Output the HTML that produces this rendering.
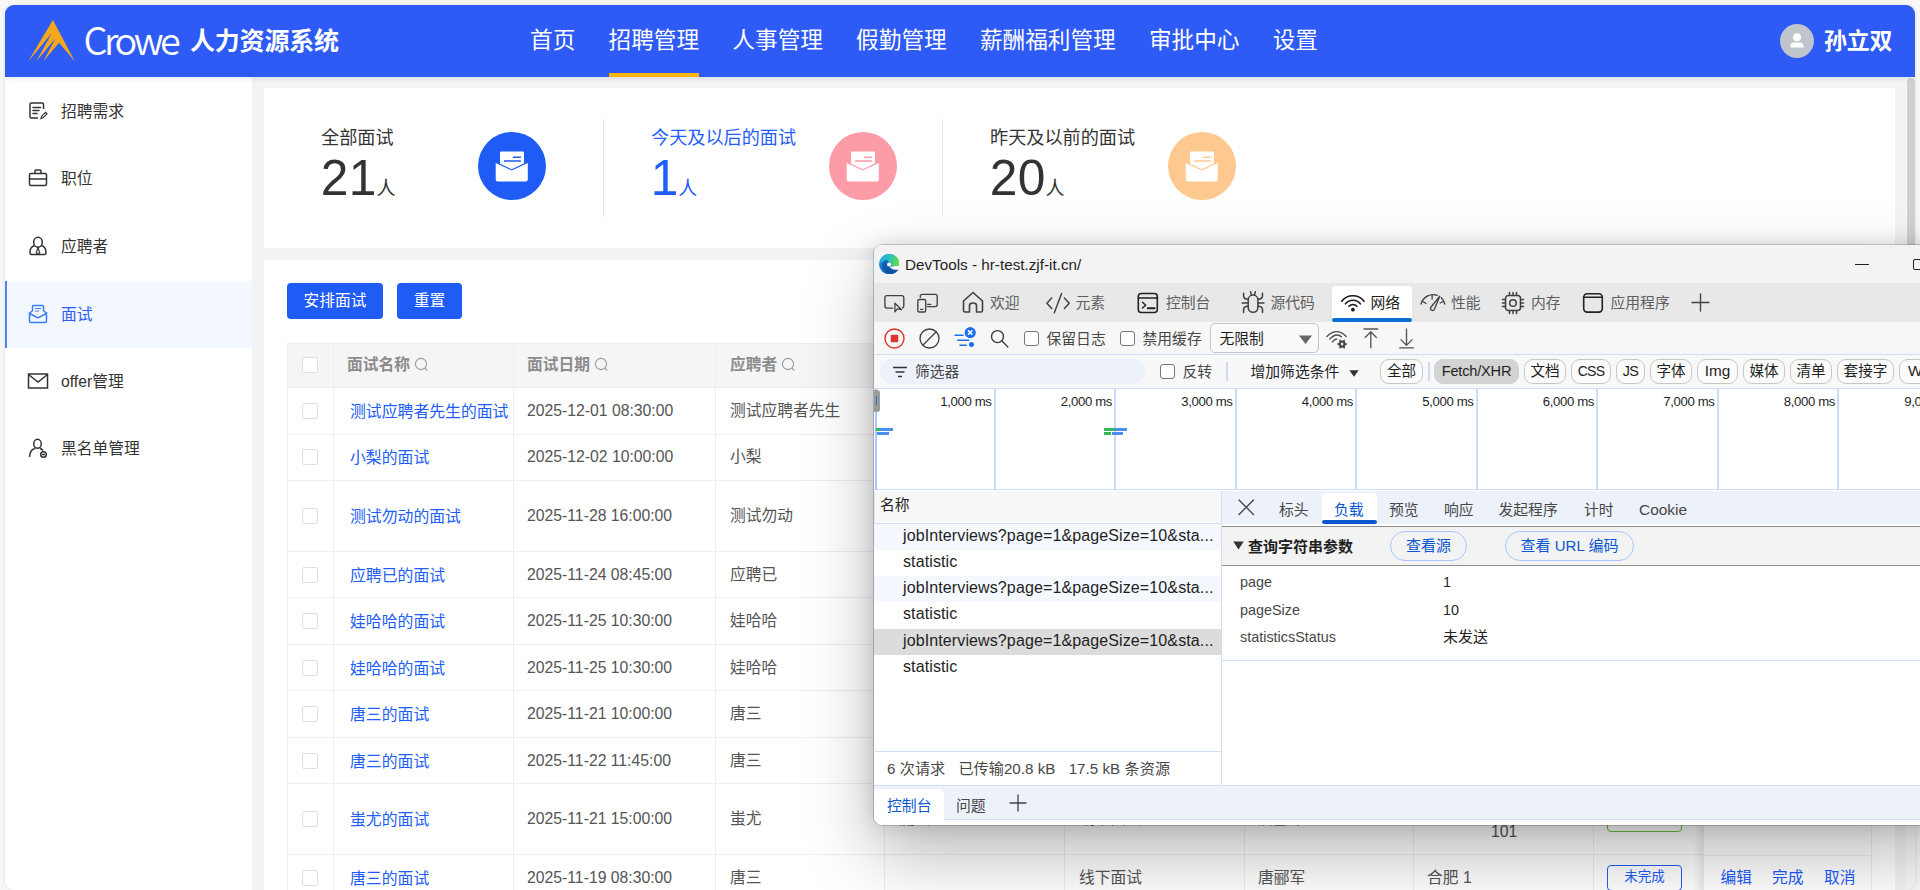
<!DOCTYPE html>
<html lang="zh-CN">
<head>
<meta charset="utf-8">
<title>人力资源系统</title>
<style>
*{box-sizing:border-box;margin:0;padding:0}
html,body{width:1920px;height:890px;overflow:hidden;background:#f7f7f7}
body{font-family:"Liberation Sans","Noto Sans CJK SC",sans-serif;color:#333;position:relative}
.abs{position:absolute}
#frame{position:absolute;left:5px;top:5px;width:1910px;height:885px;background:#f2f3f5;border-radius:9px;overflow:hidden;box-shadow:0 0 3px rgba(0,0,0,.13)}
/* header */
#hdr{position:absolute;left:0;top:0;width:1910px;height:72px;background:#2e5af6;color:#fff;z-index:5;box-shadow:0 1px 5px rgba(0,21,41,.12)}
#hdr .crowe{position:absolute;left:78.500px;top:12.300px;font-size:37.800px;line-height:44px;font-weight:350;letter-spacing:-3.450px;color:#fff;font-family:"Noto Sans CJK SC","Liberation Sans",sans-serif}
#hdr .sys{position:absolute;left:185px;top:18.300px;font-size:25px;line-height:36px;font-weight:700;letter-spacing:-.2px}
#nav{position:absolute;left:508.500px;top:0;height:72px;display:flex}
#nav span{display:block;margin:0 16.600px;font-size:22.650px;line-height:30px;padding-top:20.300px;height:72px;white-space:nowrap;position:relative}
#nav span.on:after{content:"";position:absolute;left:0;right:0;bottom:0;height:4.500px;background:#fbb50a}
#user{position:absolute;left:1819px;top:21.300px;font-size:23px;line-height:30px;font-weight:700;letter-spacing:-.2px}
#avatar{position:absolute;left:1775px;top:19px;width:34px;height:34px;border-radius:50%;background:#c0c4cc}
/* sidebar */
#side{position:absolute;left:0;top:72px;width:247px;height:830px;background:#fff}
.mi{position:absolute;left:0;margin-top:.6px;width:247px;height:67px;font-size:15.75px;line-height:67px;color:#333}
.mi b{font-weight:400;position:absolute;left:56px;top:0}
.mi svg{position:absolute;left:22px;top:22px;width:22px;height:22px}
.mi.on{background:#f3f7ff;color:#2e5af6;border-left:2px solid #4a86f7}
.mi.on b{left:54px}.mi.on svg{left:20px}
/* cards */
.card{position:absolute;background:#fff}
.st{position:absolute;top:0;height:160px}
.st .t{position:absolute;left:0;top:36.500px;font-size:18.150px;line-height:26px;white-space:nowrap}
.st .n{position:absolute;left:-.3px;top:60px;font-size:49.700px;line-height:60px;white-space:nowrap;letter-spacing:.5px}
.st .n i{font-style:normal;font-size:19px;letter-spacing:0;margin-left:-.5px}
.st .c{position:absolute;left:157px;top:44px;width:68px;height:68px;border-radius:50%}
.st .c svg{position:absolute;left:0;top:0;width:68px;height:68px}
.vd{position:absolute;top:31px;width:1px;height:98px;background:#e4e6ea}
.btn{position:absolute;top:23px;height:36px;border-radius:4px;background:#1f5cf5;color:#fff;font-size:15.75px;line-height:36px;text-align:center}
/* table */
#tb{position:absolute;left:23px;top:83px;width:1585px;height:560px;overflow:hidden;border-right:1px solid #ebeef5;border-top:1px solid #ebeef5;border-left:1px solid #ebeef5}
.r{position:relative;height:46.5px;border-bottom:1px solid #ebeef5;background:#fff;font-size:15.75px;color:#555}
.r.h{height:44px;background:#f5f5f5;color:#8c8c8c;font-weight:700}
.r.t{height:70.750px}
.r span{position:absolute;top:50%;transform:translateY(-50%);white-space:nowrap;line-height:22px}
.r .ck{left:14px;width:16px;height:16px;border:1px solid #dcdfe6;border-radius:2px;background:#fff}
.r .a{left:62px;color:#205dfa;margin-top:1px;font-size:15.850px}
.r .d{left:239px}
.r .p{left:442px}
.r.h .a{left:59px;color:#8c8c8c;margin-top:-1px;font-size:15.750px}
.r.h .p{left:442px}
.vl{position:absolute;top:0;width:1px;height:560px;background:#ebeef5;z-index:2}


.r .c5{left:791px}.r .c6{left:970px}.r .c7{left:1139px}
.tag{position:absolute;left:1319px;width:75px;height:25.500px;border:1.500px solid #205dfa;border-radius:4px;color:#205dfa;font-size:13.500px;line-height:22px;text-align:center;z-index:2}
.r .op{left:1432.500px;color:#205dfa;z-index:4;word-spacing:0}
.r.h span{margin-top:-1px}
/* devtools */
#dt{position:absolute;left:874px;top:245px;width:1070px;height:580px;border-radius:8px;overflow:hidden;background:#fff;box-shadow:0 0 0 .8px rgba(0,0,0,.22),0 30px 70px rgba(0,0,0,.28),0 0 20px rgba(0,0,0,.15);z-index:20;font-family:"Liberation Sans","Noto Sans CJK SC",sans-serif}
#dti{position:absolute;left:-874px;top:-245px;width:1960px;height:890px}
#dti div,#dti svg,#dti span{position:absolute}
.x{white-space:nowrap;font-size:14.8px;line-height:20px;color:#474747}
.x.k{color:#1f1f1f}
.ic{fill:none;stroke:#404040;stroke-width:1.350;stroke-linecap:round;stroke-linejoin:round}
.cb{width:14.5px;height:14.5px;border:1.3px solid #767676;border-radius:3px;background:#fff}
.pill{height:25px;border:1px solid #c7c7c7;border-radius:9px;font-size:14.6px;line-height:22px;text-align:center;color:#1f1f1f;white-space:nowrap;background:#fbfbfb}
.gl{top:388px;width:2px;height:102px;background:#cfdcf7}
.tl{top:393px;width:80px;text-align:right;font-size:13.200px;letter-spacing:-.38px;line-height:18px;color:#1f1f1f;white-space:nowrap}
.nr{left:874px;width:347px;height:26.300px;font-size:16.050px;line-height:23.900px;overflow:hidden;color:#1f1f1f;white-space:nowrap;padding-left:29px;letter-spacing:.1px}
.nr.z{background:#f5f8fe}
.nr.s{background:#dcdcdc}
.pt{top:499.800px;font-size:14.8px;line-height:20px;color:#474747;white-space:nowrap}
.kv{font-size:14.4px;line-height:20px;color:#474747;white-space:nowrap}
</style>
</head>
<body>
<div id="frame">
  <div id="hdr">
    <svg class="abs" style="left:0;top:0" width="100" height="72" viewBox="5 5 100 72"><path d="M52.900 20.100L74.900 61.500L59.100 42.700L43.200 61.500L55.400 38.600L36.200 61.500L51.700 33.200L28.100 61.500Z" fill="#f5a81c"/></svg>
    <div class="crowe">Crowe</div>
    <div class="sys">人力资源系统</div>
    <div id="nav"><span>首页</span><span class="on">招聘管理</span><span>人事管理</span><span>假勤管理</span><span>薪酬福利管理</span><span>审批中心</span><span>设置</span></div>
    <div id="avatar"><svg width="34" height="34" viewBox="0 0 34 34"><circle cx="17" cy="13.2" r="4" fill="#fff"/><path d="M10.3 23.5 Q10.3 18.6 14 18.6 H20 Q23.7 18.6 23.7 23.5 Z" fill="#fff"/></svg></div>
    <div id="user">孙立双</div>
  </div>
  <div id="side">
    <div class="mi" style="top:0"><svg viewBox="0 0 22 22" fill="none" stroke="#333" stroke-width="1.5"><path d="M16.5 9V4.5Q16.5 3 15 3H4.500Q3 3 3 4.500V16.500Q3 18 4.500 18H11"/><path d="M6 7.500H13.500M6 10.500H12M6 13.500H10" stroke-linecap="round"/><path d="M14 18.500L14.600 16.200L18.500 12.300L20 13.800L16.100 17.700Z" stroke-width="1.200"/></svg><b>招聘需求</b></div>
    <div class="mi" style="top:67.500px"><svg viewBox="0 0 22 22" fill="none" stroke="#333" stroke-width="1.500"><rect x="2.500" y="6.500" width="17" height="12" rx="1.500"/><path d="M8 6.500V4Q8 3 9 3H13Q14 3 14 4V6.500M2.500 12H19.500"/></svg><b>职位</b></div>
    <div class="mi" style="top:135px"><svg viewBox="0 0 22 22" fill="none" stroke="#333" stroke-width="1.500"><ellipse cx="11" cy="7.300" rx="4.300" ry="5"/><path d="M7.500 10.500Q2.500 12.500 3 18Q3 19.500 4.500 19.500H17.500Q19 19.500 19 18Q19.500 12.500 14.500 10.500"/><path d="M11 12.500L9.300 17.500L11 19.300L12.700 17.500Z" stroke-width="1.200"/></svg><b>应聘者</b></div>
    <div class="mi on" style="top:203px"><svg viewBox="0 0 22 22" fill="none" stroke="#3a7bf7" stroke-width="1.500"><path d="M5.500 8V3.500Q5.500 2.500 6.500 2.500H15.500Q16.500 2.500 16.500 3.500V8"/><path d="M8 5.500H14M8 8H12" stroke-width="1.200"/><path d="M5.500 8L2.500 10V18Q2.500 19.500 4 19.500H18Q19.500 19.500 19.500 18V10L16.500 8M2.500 10.500L11 15L19.500 10.500"/></svg><b>面试</b></div>
    <div class="mi" style="top:270px"><svg viewBox="0 0 22 22" fill="none" stroke="#333" stroke-width="1.500"><rect x="1.500" y="4" width="19" height="14"/><path d="M1.500 4.500L11 12L20.500 4.500"/></svg><b>offer管理</b></div>
    <div class="mi" style="top:337.500px"><svg viewBox="0 0 22 22" fill="none" stroke="#333" stroke-width="1.500"><ellipse cx="10.500" cy="6.800" rx="3.800" ry="4.500"/><path d="M2.500 20Q3 12.500 8 11.500M13 11.500Q15 12 16 13.500"/><circle cx="16.500" cy="17.500" r="2.800"/><path d="M15 17.500H18"/></svg><b>黑名单管理</b></div>
  </div>
  <div class="abs" style="left:1901px;top:72px;width:9.500px;height:830px;background:#f7f7f8"></div><div class="abs" style="left:1901.500px;top:72.500px;width:8.500px;height:600px;background:#cfd0d3;border-radius:5px"></div>
  <!-- stat card -->
  <div class="card" style="left:259px;top:83px;width:1631px;height:160px">
    <div class="st" style="left:57px"><div class="t">全部面试</div><div class="n">21<i>人</i></div><div class="c" style="background:#1f5cf5"><svg viewBox="0 0 68 68"><rect x="22" y="19.500" width="24" height="20" rx="1.300" fill="#fff"/><path d="M34.800 25.300H42.900M25.900 29H42.900" stroke="#1f5cf5" stroke-width="1.600"/><path d="M16 28.800L33.700 37.200L51.500 28.800V42H16Z" fill="#1f5cf5"/><path d="M17.700 31L33.700 38.600L49.800 31V47.500Q49.800 49.500 47.800 49.500H19.700Q17.700 49.500 17.700 47.500Z" fill="#fff"/></svg></div></div>
    <div class="vd" style="left:339px"></div>
    <div class="st" style="left:387px;color:#1f5dfc"><div class="t">今天及以后的面试</div><div class="n">1<i>人</i></div><div class="c" style="background:#fd9ba6;left:178px"><svg viewBox="0 0 68 68"><rect x="22" y="19.500" width="24" height="20" rx="1.300" fill="#fff"/><path d="M34.800 25.300H42.900M25.900 29H42.900" stroke="#fd9ba6" stroke-width="1.600"/><path d="M16 28.800L33.700 37.200L51.500 28.800V42H16Z" fill="#fd9ba6"/><path d="M17.700 31L33.700 38.600L49.800 31V47.500Q49.800 49.500 47.800 49.500H19.700Q17.700 49.500 17.700 47.500Z" fill="#fff"/></svg></div></div>
    <div class="vd" style="left:678px"></div>
    <div class="st" style="left:726px"><div class="t">昨天及以前的面试</div><div class="n">20<i>人</i></div><div class="c" style="background:#ffc88e;left:178px"><svg viewBox="0 0 68 68"><rect x="22" y="19.500" width="24" height="20" rx="1.300" fill="#fff"/><path d="M34.800 25.300H42.900M25.900 29H42.900" stroke="#ffc88e" stroke-width="1.600"/><path d="M16 28.800L33.700 37.200L51.500 28.800V42H16Z" fill="#ffc88e"/><path d="M17.700 31L33.700 38.600L49.800 31V47.500Q49.800 49.500 47.800 49.500H19.700Q17.700 49.500 17.700 47.500Z" fill="#fff"/></svg></div></div>
  </div>
  <!-- table card -->
  <div class="card" id="tcard" style="left:259px;top:255px;width:1631px;height:640px">
    <div class="btn" style="left:23px;width:96px">安排面试</div>
    <div class="btn" style="left:133px;width:65px">重置</div>
    <div id="tb">
      <div class="vl" style="left:45px"></div><div class="vl" style="left:225px"></div><div class="vl" style="left:427px"></div><div class="vl" style="left:596px"></div><div class="vl" style="left:776px"></div><div class="vl" style="left:956px"></div><div class="vl" style="left:1125px"></div><div class="vl" style="left:1305px"></div><div class="abs" style="left:1415px;top:0;width:168px;height:560px;background:#fff;z-index:3;box-shadow:-3px 0 8px rgba(0,0,0,.10);border-left:1px solid #ebeef5"></div>
      <div class="abs" style="left:1415px;top:510.500px;width:170px;height:1px;background:#ebeef5;z-index:4"></div><div class="r h"><span class="ck"></span><span class="a">面试名称<svg width="15" height="15" viewBox="0 0 15 15" style="vertical-align:-2px;margin-left:4px" fill="none" stroke="#9a9a9a" stroke-width="1.100"><circle cx="7" cy="7" r="5.600"/><path d="M11 11.200L13.300 13.500"/></svg></span><span class="d">面试日期<svg width="15" height="15" viewBox="0 0 15 15" style="vertical-align:-2px;margin-left:4px" fill="none" stroke="#9a9a9a" stroke-width="1.100"><circle cx="7" cy="7" r="5.600"/><path d="M11 11.200L13.300 13.500"/></svg></span><span class="p">应聘者<svg width="15" height="15" viewBox="0 0 15 15" style="vertical-align:-2px;margin-left:4px" fill="none" stroke="#9a9a9a" stroke-width="1.100"><circle cx="7" cy="7" r="5.600"/><path d="M11 11.200L13.300 13.500"/></svg></span></div>
      <div class="r"><span class="ck"></span><span class="a">测试应聘者先生的面试</span><span class="d">2025-12-01 08:30:00</span><span class="p">测试应聘者先生</span></div>
      <div class="r"><span class="ck"></span><span class="a">小梨的面试</span><span class="d">2025-12-02 10:00:00</span><span class="p">小梨</span></div>
      <div class="r t"><span class="ck"></span><span class="a">测试勿动的面试</span><span class="d">2025-11-28 16:00:00</span><span class="p">测试勿动</span></div>
      <div class="r"><span class="ck"></span><span class="a">应聘已的面试</span><span class="d">2025-11-24 08:45:00</span><span class="p">应聘已</span></div>
      <div class="r"><span class="ck"></span><span class="a">娃哈哈的面试</span><span class="d">2025-11-25 10:30:00</span><span class="p">娃哈哈</span></div>
      <div class="r"><span class="ck"></span><span class="a">娃哈哈的面试</span><span class="d">2025-11-25 10:30:00</span><span class="p">娃哈哈</span></div>
      <div class="r"><span class="ck"></span><span class="a">唐三的面试</span><span class="d">2025-11-21 10:00:00</span><span class="p">唐三</span></div>
      <div class="r"><span class="ck"></span><span class="a">唐三的面试</span><span class="d">2025-11-22 11:45:00</span><span class="p">唐三</span></div>
      <div class="r t"><span class="ck"></span><span class="a">蚩尤的面试</span><span class="d">2025-11-21 15:00:00</span><span class="p">蚩尤</span><span style="left:611px">测试</span><span class="c5">线下面试</span><span class="c6">唐郦军</span><span style="left:1203px;top:37px;transform:none">101</span><div class="tag" style="top:22.300px;border-color:#67c23a;color:#67c23a"></div></div>
      <div class="r"><span class="ck"></span><span class="a">唐三的面试</span><span class="d">2025-11-19 08:30:00</span><span class="p">唐三</span><span class="c5">线下面试</span><span class="c6">唐郦军</span><span class="c7">合肥 1</span><div class="tag" style="top:10px">未完成</div><span class="op">编辑</span><span class="op" style="left:1484px">完成</span><span class="op" style="left:1536px">取消</span></div>
    </div>
  </div>
</div>

<div id="dt"><div id="dti">
  <!-- title bar -->
  <div style="left:874px;top:245px;width:1060px;height:38px;background:#f3f3f3"></div>
  <svg style="left:878.800px;top:253.800px" width="20.400" height="20.400" viewBox="0 0 20.400 20.400"><defs><linearGradient id="eg1" x1="0" y1="0" x2="0.700" y2="1"><stop offset="0" stop-color="#1e9be6"/><stop offset="1" stop-color="#0a57b0"/></linearGradient><linearGradient id="eg2" x1="0" y1="0.300" x2="1" y2="0.500"><stop offset="0" stop-color="#27a6ec"/><stop offset="0.500" stop-color="#2cc3b8"/><stop offset="1" stop-color="#6bde48"/></linearGradient><linearGradient id="eg3" x1="0" y1="0" x2="1" y2="1"><stop offset="0" stop-color="#1263b8"/><stop offset="1" stop-color="#0c4a96"/></linearGradient></defs><circle cx="10.200" cy="10.200" r="10.100" fill="url(#eg1)"/><path d="M0.200 9.500C0.900 4 5 0.100 10.200 0.100C16 0.100 20.300 4.400 20.300 9.200C20.300 10.700 20.100 11.400 19.700 11.900L12.500 12.600C13.200 11.600 12.900 9.700 11.600 8.700C10.100 7.600 8 7.700 6.500 8.800C5 6.800 1.800 7.100 0.200 9.500Z" fill="url(#eg2)"/><path d="M6.300 6.300C2.800 8.200 2.400 13.200 5.500 16.800C8 19.700 12 20.500 15.200 19.200C17.200 18.300 18.700 17 19.500 15.500C16.200 16.500 12.600 16 10.400 13.100C8.600 12.900 7.300 11.600 7.400 10.100C7.400 8.400 8.200 7.300 9.700 6.900C8.700 5.800 7.300 5.800 6.300 6.300Z" fill="url(#eg3)"/><path d="M12.300 12.600L20.600 11.700V15.300L19.500 15.500C16.600 16.300 13.200 15.500 10.500 12.900Z" fill="#f3f3f3"/><circle cx="10.200" cy="10.500" r="2.100" fill="#f8f8f8"/></svg>
  <div class="x k" style="left:905px;top:254.800px;font-size:15.250px;letter-spacing:0">DevTools - hr-test.zjf-it.cn/</div>
  <div style="left:1855px;top:263.500px;width:14px;height:1.300px;background:#1f1f1f"></div>
  <div style="left:1913px;top:259px;width:12px;height:11px;border:1.300px solid #1f1f1f;border-radius:2px"></div>
  <!-- tab bar -->
  <div style="left:874px;top:283px;width:1060px;height:38.500px;background:#e8e8e8"></div>
  <div style="left:1332px;top:286px;width:80px;height:35.500px;background:#fff;border-radius:4px 4px 0 0"></div>
  <div style="left:1332px;top:318px;width:80px;height:3.500px;background:#0b6fd6;border-radius:2px"></div>
  <svg class="ic" style="left:880px;top:290px" width="30" height="26" viewBox="880 290 30 26"><path d="M892.600 308.100H887Q884.900 308.100 884.900 306V297.700Q884.900 295.600 887 295.600H901.700Q903.800 295.600 903.800 297.700V306Q903.800 307.600 902.600 307.900"/><path d="M894.900 303.200V311.900L897.300 308.900L901.600 309.700Z" stroke-width="1.250"/></svg>
  <svg class="ic" style="left:914px;top:290px" width="30" height="26" viewBox="914 290 30 26"><path d="M920.300 297.200V296.300Q920.300 294.300 922.300 294.300H935.200Q937.200 294.300 937.200 296.300V304.600Q937.200 306.600 935.200 306.600H927.500"/><rect x="917.800" y="299.500" width="7.900" height="12.500" rx="1.500"/><path d="M920.600 309.300H922.900M927.600 304.300H930.800"/></svg>
  <svg class="ic" style="left:961px;top:290px;stroke-width:1.600" width="24" height="24" viewBox="0 0 24 24"><path d="M2.500 11L12 2.500L21.500 11V20.500Q21.500 22 20 22H15.500V15.500Q15.500 13 12 13Q8.500 13 8.500 15.500V22H4Q2.500 22 2.500 20.500Z"/></svg>
  <div class="x" style="left:990px;top:292.500px;color:#5e5e5e">欢迎</div>
  <svg class="ic" style="left:1042px;top:290px;stroke-width:1.450" width="32" height="26" viewBox="1042 290 32 26"><path d="M1051.700 298L1046.900 303.200L1051.700 308.500M1064.400 298L1069.200 303.200L1064.400 308.500M1061.600 293.400L1054.300 312.800"/></svg>
  <div class="x" style="left:1075.500px;top:292.500px;color:#5e5e5e">元素</div>
  <svg class="ic" style="left:1137px;top:292px;stroke-width:1.600;stroke:#222" width="22" height="22" viewBox="0 0 22 22"><rect x="1.300" y="1.500" width="19" height="19" rx="3"/><path d="M1.500 6H20.500"/><path d="M5.500 10.300L8.700 13.200L5.500 16" stroke-width="1.500"/><path d="M10.700 16.200H17.600" stroke-width="1.900"/></svg>
  <div class="x" style="left:1166px;top:292.500px;color:#5e5e5e">控制台</div>
  <svg class="ic" style="left:1238px;top:288px;stroke-width:1.500" width="30" height="28" viewBox="1238 288 30 28"><rect x="1248.200" y="295" width="9.700" height="17.300" rx="4.850"/><path d="M1250.500 291.800L1251.400 294.900M1255.300 291.800L1254.500 294.900"/><path d="M1243.600 293.300V296Q1243.600 299.200 1248.200 299.200M1262.500 293.300V296Q1262.500 299.200 1257.900 299.200M1242.200 303H1248.200M1257.900 303H1263.900M1248.200 306.300Q1243.600 306.300 1243.600 309.500V312.600M1257.900 306.300Q1262.500 306.300 1262.500 309.500V312.600"/></svg>
  <div class="x" style="left:1270.500px;top:292.500px;color:#5e5e5e">源代码</div>
  <svg class="ic" style="left:1338px;top:290px;stroke-width:1.550;stroke:#1a1a1a" width="30" height="26" viewBox="1338 290 30 26"><path d="M1341.72 301.27A14.00 14.00 0 0 1 1364.08 301.27M1345.41 303.85A9.50 9.50 0 0 1 1360.39 303.85M1348.92 306.36A5.20 5.20 0 0 1 1356.88 306.36"/><circle cx="1352.90" cy="309.70" r="1.900" fill="#1a1a1a" stroke="none"/></svg>
  <div class="x k" style="left:1370.500px;top:292.500px">网络</div>
  <svg class="ic" style="left:1418px;top:290px;stroke-width:1.350" width="30" height="24" viewBox="1418 290 30 24"><path d="M1421 304A12.700 12.700 0 0 1 1437.300 295.300M1441.300 297.700A12.700 12.700 0 0 1 1444.800 304"/><path d="M1422.300 301L1426 303.400M1432.100 295V299.200M1443.400 301.300L1440.200 303" stroke-width="1.200"/><path d="M1439.800 296.200L1434.400 309.300A2 2 0 0 1 1430.700 307.500Z" stroke-width="1.300"/></svg>
  <div class="x" style="left:1451px;top:292.500px;color:#5e5e5e">性能</div>
  <svg class="ic" style="left:1501px;top:291px;stroke-width:1.500" width="24" height="24" viewBox="0 0 24 24"><rect x="4.500" y="4.500" width="15" height="15" rx="3"/><circle cx="12" cy="12" r="3.300"/><path d="M8.500 4.500V1.500M12 4.500V1.500M15.500 4.500V1.500M8.500 22.500V19.500M12 22.500V19.500M15.500 22.500V19.500M4.500 8.500H1.500M4.500 12H1.500M4.500 15.500H1.500M22.500 8.500H19.500M22.500 12H19.500M22.500 15.500H19.500"/></svg>
  <div class="x" style="left:1531px;top:292.500px;color:#5e5e5e">内存</div>
  <svg class="ic" style="left:1582px;top:292px;stroke-width:1.600;stroke:#222" width="22" height="22" viewBox="0 0 22 22"><rect x="1.700" y="1.700" width="18.600" height="18.400" rx="3.500"/><path d="M1.900 5.200H20.100"/></svg>
  <div class="x" style="left:1610.500px;top:292.500px;color:#5e5e5e">应用程序</div>
  <svg class="ic" style="left:1691px;top:293px" width="19" height="19" viewBox="0 0 19 19"><path d="M9.500 1V18M1 9.500H18"/></svg>
  <!-- toolbar -->
  <div style="left:874px;top:321.500px;width:1060px;height:33px;background:#f7f7f7;border-bottom:1px solid #d0def7"></div>
  <svg style="left:883px;top:327px" width="23" height="23" viewBox="0 0 23 23"><circle cx="11.500" cy="11.500" r="9.500" fill="none" stroke="#dc362e" stroke-width="1.400"/><rect x="7.700" y="7.700" width="7.600" height="7.600" rx="1.300" fill="#dc362e"/></svg>
  <svg class="ic" style="left:918px;top:327px;stroke-width:1.300" width="23" height="23" viewBox="0 0 23 23"><circle cx="11.500" cy="11.500" r="9.500"/><path d="M4.800 18.200L18.200 4.800"/></svg>
  <svg style="left:950px;top:324px" width="30" height="28" viewBox="950 324 30 28"><path d="M955 335.300H963.200M957.700 340.300H968.800M960 345.300H966.300" stroke="#1a6ff0" stroke-width="1.400" fill="none" stroke-linecap="round"/><circle cx="970.200" cy="332.600" r="5.600" fill="#1a6ff0"/><path d="M968 330.400L972.400 334.800M972.400 330.400L968 334.800" stroke="#fff" stroke-width="1.500"/><circle cx="971.500" cy="344.500" r="2.500" fill="#1a6ff0"/></svg>
  <svg class="ic" style="left:986px;top:326px;stroke-width:1.400" width="26" height="26" viewBox="986 326 26 26"><circle cx="997.500" cy="336.600" r="6"/><path d="M1002 341.100L1007.800 346.900"/></svg>
  <div class="cb" style="left:1024px;top:331px"></div>
  <div class="x" style="left:1046.500px;top:328.500px">保留日志</div>
  <div class="cb" style="left:1120px;top:331px"></div>
  <div class="x" style="left:1142.500px;top:328.500px">禁用缓存</div>
  <div style="left:1209.500px;top:323px;width:109px;height:30px;border:1px solid #c6c6c6;border-radius:5px;background:#f9f9f9"></div>
  <div class="x k" style="left:1219.500px;top:328.500px">无限制</div>
  <svg style="left:1298px;top:335px" width="15" height="10" viewBox="0 0 15 10"><path d="M1 0.500H14L7.500 9Z" fill="#666"/></svg>
  <svg class="ic" style="left:1322px;top:326px;stroke-width:1.300;stroke:#4a4a4a" width="30" height="26" viewBox="1322 326 30 26"><path d="M1326.900 336.500Q1336.700 326.800 1346.200 336.500M1329.700 339.100Q1336 332.300 1341.500 336.700M1332.300 341.900Q1334.300 339.300 1336.600 339"/><path d="M1347.40 344.10L1345.04 345.80L1344.75 348.69L1342.10 347.50L1339.45 348.69L1339.16 345.80L1336.80 344.10L1339.16 342.40L1339.45 339.51L1342.10 340.70L1344.75 339.51L1345.04 342.40Z" fill="#4a4a4a" stroke="none"/><circle cx="1342.100" cy="344.100" r="1.300" fill="#f7f7f7" stroke="none"/></svg>
  <svg class="ic" style="left:1360px;top:326px;stroke-width:1.350;stroke:#555;stroke-linecap:butt" width="22" height="26" viewBox="1360 326 22 26"><path d="M1363.500 329H1378.100M1370.800 348.300V331.800M1365 337.700L1370.800 331.700L1376.700 337.700"/></svg>
  <svg class="ic" style="left:1396px;top:326px;stroke-width:1.350;stroke:#555;stroke-linecap:butt" width="22" height="26" viewBox="1396 326 22 26"><path d="M1399.200 347.800H1413.800M1406.500 328.500V345.200M1400.600 339.400L1406.500 345.400L1412.400 339.400"/></svg>
  <!-- filter bar -->
  <div style="left:874px;top:355px;width:1060px;height:33.800px;background:#f8f8f9;border-bottom:1px solid #d0def7"></div>
  <div style="left:880px;top:359px;width:265px;height:25px;border-radius:13px;background:#edf1fa"></div>
  <svg style="left:892px;top:366px" width="16" height="12" viewBox="0 0 16 12"><path d="M1 1.500H15M3.500 6H12.500M6 10.500H10" stroke="#333" stroke-width="1.400" fill="none"/></svg>
  <div class="x" style="left:915px;top:361.500px">筛选器</div>
  <div class="cb" style="left:1160px;top:364px"></div>
  <div class="x" style="left:1182.500px;top:361.500px">反转</div>
  <div style="left:1226px;top:362px;width:2px;height:19px;background:#cfdcf7"></div>
  <div class="x k" style="left:1250.500px;top:361.500px">增加筛选条件</div>
  <svg style="left:1349px;top:370px" width="10" height="7" viewBox="0 0 10 7"><path d="M0.300 0.300H9.700L5 6.700Z" fill="#333"/></svg>
  <div class="pill" style="left:1380px;top:359px;width:43px">全部</div>
  <div style="left:1427.500px;top:362px;width:2px;height:19px;background:#cfdcf7"></div>
  <div class="pill" style="left:1434px;top:359px;width:85px;background:#d3d3d3;border-color:#d3d3d3;font-size:14.600px;letter-spacing:-.2px">Fetch/XHR</div>
  <div class="pill" style="left:1524px;top:359px;width:42px">文档</div>
  <div class="pill" style="left:1571px;top:359px;width:40px;font-size:14px;letter-spacing:-.7px">CSS</div>
  <div class="pill" style="left:1616px;top:359px;width:29px;font-size:14.400px;letter-spacing:-.6px">JS</div>
  <div class="pill" style="left:1650px;top:359px;width:42px">字体</div>
  <div class="pill" style="left:1697px;top:359px;width:41px;font-size:15.300px">Img</div>
  <div class="pill" style="left:1743px;top:359px;width:42px">媒体</div>
  <div class="pill" style="left:1790px;top:359px;width:42px">清单</div>
  <div class="pill" style="left:1837px;top:359px;width:57px">套接字</div>
  <div class="pill" style="left:1899px;top:359px;width:60px;font-size:15.300px;text-align:left;padding-left:8px">Wasm</div>
  <!-- timeline -->
  <div style="left:874px;top:389px;width:1060px;height:101px;background:#fff;border-bottom:1px solid #d0def7"></div>
  <div class="gl" style="left:993.500px"></div><div class="gl" style="left:1114px"></div><div class="gl" style="left:1234.500px"></div><div class="gl" style="left:1355px"></div><div class="gl" style="left:1475.500px"></div><div class="gl" style="left:1596px"></div><div class="gl" style="left:1716.500px"></div><div class="gl" style="left:1837px"></div>
  <div class="tl" style="left:911.500px">1,000 ms</div><div class="tl" style="left:1032px">2,000 ms</div><div class="tl" style="left:1152.500px">3,000 ms</div><div class="tl" style="left:1273px">4,000 ms</div><div class="tl" style="left:1393.500px">5,000 ms</div><div class="tl" style="left:1514px">6,000 ms</div><div class="tl" style="left:1634.500px">7,000 ms</div><div class="tl" style="left:1755px">8,000 ms</div><div class="tl" style="left:1875.500px">9,000 ms</div>
  <div style="left:875px;top:389px;width:2px;height:101px;background:#a8c7fa"></div>
  <div style="left:874px;top:390px;width:5.500px;height:22px;background:#9a9a9a;border-radius:0 3px 3px 0"></div>
  <div style="left:875.500px;top:396px;width:1.500px;height:9px;background:#2f6fe0"></div>
  <div style="left:876px;top:428.200px;width:4px;height:2.800px;background:#34b95a"></div><div style="left:880px;top:428.200px;width:12.500px;height:2.800px;background:#4d8df6"></div><div style="left:877px;top:431.900px;width:11.500px;height:2.800px;background:#4d8df6"></div>
  <div style="left:1104px;top:428.200px;width:10.500px;height:2.800px;background:#34b95a"></div><div style="left:1114.500px;top:428.200px;width:12.500px;height:2.800px;background:#4d8df6"></div><div style="left:1104px;top:431.900px;width:6.500px;height:2.800px;background:#34b95a"></div><div style="left:1112px;top:431.900px;width:11px;height:2.800px;background:#4d8df6"></div>
  <!-- name list -->
  <div style="left:874px;top:490.500px;width:347px;height:33.200px;background:#f8f8f9;border-bottom:1px solid #d0def7;border-left:1px solid #dbe6fb"></div>
  <div class="x k" style="left:880px;top:495.200px">名称</div>
  <div class="nr z" style="top:523.50px">jobInterviews?page=1&amp;pageSize=10&amp;sta...</div>
  <div class="nr" style="top:549.80px">statistic</div>
  <div class="nr z" style="top:576.10px">jobInterviews?page=1&amp;pageSize=10&amp;sta...</div>
  <div class="nr" style="top:602.40px">statistic</div>
  <div class="nr s" style="top:628.70px">jobInterviews?page=1&amp;pageSize=10&amp;sta...</div>
  <div class="nr" style="top:655.00px">statistic</div>
  <div style="left:1221px;top:490.500px;width:1px;height:295px;background:#d0def7"></div>
  <div style="left:875px;top:751px;width:346px;height:1px;background:#d0def7"></div>
  <div class="x" style="left:887px;top:758.800px;font-size:15.150px;word-spacing:.2px">6 次请求&nbsp;&nbsp; 已传输20.8 kB&nbsp;&nbsp; 17.5 kB 条资源</div>
  <!-- detail pane -->
  <div style="left:1222px;top:490.500px;width:720px;height:33.500px;background:#edf1fa"></div>
  <svg class="ic" style="left:1237px;top:497.500px;stroke-width:1.300" width="18" height="18" viewBox="0 0 18 18"><path d="M2 2L16.500 16.500M16.500 2L2 16.500"/></svg>
  <div class="pt" style="left:1279px">标头</div>
  <div style="left:1322px;top:493px;width:55px;height:31px;background:#fff;border-radius:5px 5px 0 0"></div>
  <div style="left:1322px;top:519.500px;width:55px;height:4px;background:#0b57d0;border-radius:2px"></div>
  <div class="pt" style="left:1334px;color:#0b57d0">负载</div>
  <div class="pt" style="left:1389px">预览</div>
  <div class="pt" style="left:1444px">响应</div>
  <div class="pt" style="left:1498.500px">发起程序</div>
  <div class="pt" style="left:1584px">计时</div>
  <div class="pt" style="left:1639px;font-size:15.450px">Cookie</div>
  <div style="left:1222px;top:524px;width:720px;height:40.300px;background:#f3f3f3;border-top:1.500px solid #8e8e8e;border-bottom:1.500px solid #8e8e8e;margin-top:1.700px"></div>
  <svg style="left:1233px;top:541px" width="11" height="9" viewBox="0 0 11 9"><path d="M0.300 0.500H10.700L5.500 8.500Z" fill="#333"/></svg>
  <div class="x k" style="left:1248px;top:537.200px;font-weight:700;font-size:15px">查询字符串参数</div>
  <div class="pill" style="left:1390px;top:531px;width:77px;height:29.500px;border-radius:15px;border-color:#a8c7fa;color:#0b57d0;line-height:27.400px;background:#f3f3f3;font-size:15px">查看源</div>
  <div class="pill" style="left:1505px;top:531px;width:129px;height:29.500px;border-radius:15px;border-color:#a8c7fa;color:#0b57d0;line-height:27.400px;background:#f3f3f3;font-size:15px">查看 URL 编码</div>
  <div class="kv" style="left:1240px;top:572px">page</div><div class="kv k" style="left:1443px;top:572px;color:#1f1f1f">1</div>
  <div class="kv" style="left:1240px;top:599.500px">pageSize</div><div class="kv" style="left:1443px;top:599.500px;color:#1f1f1f">10</div>
  <div class="kv" style="left:1240px;top:627px">statisticsStatus</div><div class="kv" style="left:1443px;top:627px;color:#1f1f1f;font-size:15px">未发送</div>
  <div style="left:1222px;top:660px;width:720px;height:1px;background:#d0def7"></div>
  <!-- drawer -->
  <div style="left:874px;top:785px;width:1060px;height:35px;background:#edf1fa;border-top:1px solid #d0def7"></div>
  <div style="left:874px;top:789px;width:70px;height:37px;background:#fff;border-radius:0 5px 0 0"></div>
  <div style="left:944px;top:819px;width:1000px;height:1px;background:#d0def7"></div>
  <div class="x" style="left:887px;top:795.700px;color:#0b57d0;font-size:14.850px">控制台</div>
  <div class="x" style="left:956px;top:795.700px;font-size:14.850px">问题</div>
  <svg class="ic" style="left:1009px;top:794px;stroke-width:1.300" width="18" height="18" viewBox="0 0 18 18"><path d="M9 1V17M1 9H17"/></svg>
</div></div>
</body>
</html>
